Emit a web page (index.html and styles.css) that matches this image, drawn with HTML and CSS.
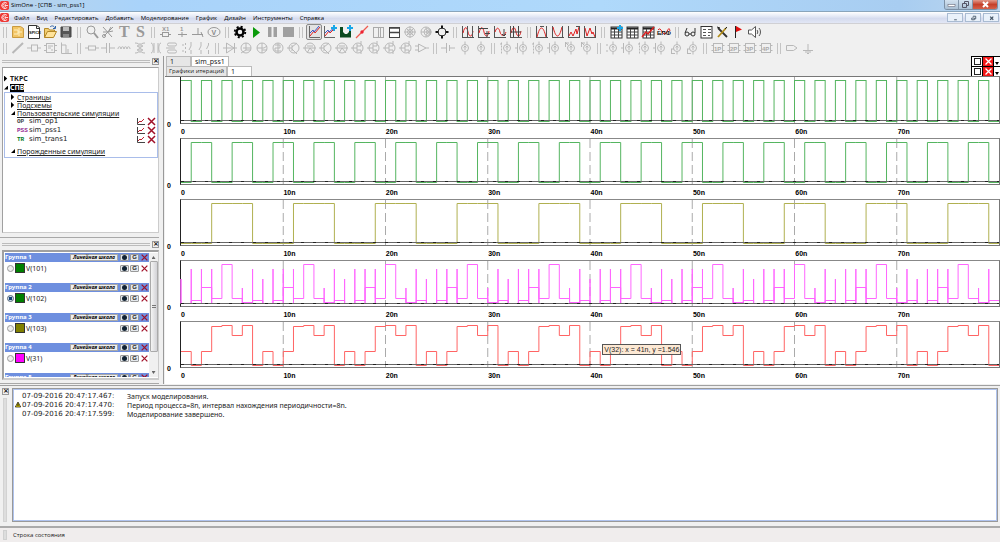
FILE: index.html
```html
<!DOCTYPE html>
<html lang="ru">
<head>
<meta charset="utf-8">
<title>SimOne - [СПВ - sim_pss1]</title>
<link rel="stylesheet" href="styles.css">
</head>
<body>
<div class="app">
  <header class="titlebar">
    <svg class="logo" viewBox="0 0 10 10"><rect width="10" height="10" rx="2" fill="#ee3a35"/><path d="M7.8 2.6A3.4 3.4 0 1 0 8 7.2M6.4 3.9A1.8 1.8 0 1 0 6.5 6M5 5h4" fill="none" stroke="#fff" stroke-width=".9"/></svg>
    <span class="title">SimOne - [СПВ - sim_pss1]</span>
    <div class="winbtns">
      <button class="win" aria-label="Свернуть"><svg viewBox="0 0 9 9"><rect x="1" y="4.500" width="7" height="2" fill="#fff" stroke="#556" stroke-width=".5"/></svg></button>
      <button class="win" aria-label="Развернуть"><svg viewBox="0 0 9 9"><path d="M3.500 3V1.500h4v4H6M1.500 3.500h4v4h-4z" fill="none" stroke="#556"/></svg></button>
      <button class="win win-close" aria-label="Закрыть"><svg viewBox="0 0 9 9"><path d="M2 2l5 5M7 2L2 7" stroke="#fff" stroke-width="2"/></svg></button>
    </div>
  </header>
  <nav class="menubar">
    <svg class="logo" viewBox="0 0 10 10"><rect width="10" height="10" rx="2" fill="#ee3a35"/><path d="M7.8 2.6A3.4 3.4 0 1 0 8 7.2M6.4 3.9A1.8 1.8 0 1 0 6.5 6M5 5h4" fill="none" stroke="#fff" stroke-width=".9"/></svg>
    <div class="menus">
      <button>Файл</button><button>Вид</button><button>Редактировать</button><button>Добавить</button><button>Моделирование</button><button>График</button><button>Дизайн</button><button>Инструменты</button><button>Справка</button>
    </div>
    <div class="mdibtns">
      <button class="mdi" aria-label="Свернуть окно"><svg viewBox="0 0 9 9"><path d="M3 6.500h3" stroke="#456"/></svg></button>
      <button class="mdi" aria-label="Восстановить окно"><svg viewBox="0 0 9 9"><path d="M4 3V2.500h3v3H6M2.500 4.500h3v2h-3z" fill="none" stroke="#456"/></svg></button>
      <button class="mdi" aria-label="Закрыть окно"><svg viewBox="0 0 9 9"><path d="M3 3l3.500 3.500M6.500 3L3 6.500" stroke="#456" stroke-width="1.300"/></svg></button>
    </div>
  </nav>
  <div class="toolbar" id="bar-main"></div>
  <div class="toolbar" id="bar-parts"></div>

  <main class="work">
    <aside class="side">
      <section class="dock">
        <div class="dockbar"><i></i><button class="x" aria-label="Закрыть панель">×</button></div>
        <div class="box tree">
          <div class="node root"><b class="tri"></b><span>ТКРС</span></div>
          <div class="node root"><b class="tri open"></b><span class="sel">СПВ</span></div>
          <div class="branch">
            <div class="node"><b class="tri"></b><a href="#">Страницы</a></div>
            <div class="node"><b class="tri"></b><a href="#">Подсхемы</a></div>
            <div class="node"><b class="tri open"></b><a href="#">Пользовательские симуляции</a></div>
            <div class="sim"><em class="op">OP</em><span>sim_op1</span><button class="plot" aria-label="График"></button><button class="del" aria-label="Удалить"></button></div>
            <div class="sim"><em class="pss">PSS</em><span>sim_pss1</span><button class="plot" aria-label="График"></button><button class="del" aria-label="Удалить"></button></div>
            <div class="sim"><em class="tr">TR</em><span>sim_trans1</span><button class="plot" aria-label="График"></button><button class="del" aria-label="Удалить"></button></div>
            <div class="node last"><b class="tri open"></b><a href="#">Порожденные симуляции</a></div>
          </div>
        </div>
      </section>
      <section class="dock dock-groups">
        <div class="dockbar"><i></i><button class="x" aria-label="Закрыть панель">×</button></div>
        <div class="box groups">
          <div class="grouplist" id="groups"></div>
          <div class="scroll"><b class="up"></b><div class="thumb"></div><b class="down"></b></div>
        </div>
      </section>
    </aside>

    <section class="view">
      <div class="tabs">
        <div class="tabrow"><button class="tab">1</button><button class="tab on">sim_pss1</button>
          <div class="ctl"><button class="sq" aria-label="Развернуть"><i></i></button><button class="sq red" aria-label="Закрыть"></button><button class="sq drop" aria-label="Список"></button></div></div>
        <div class="tabrow"><button class="tab wide">Графики итераций</button><button class="tab on">1</button>
          <div class="ctl"><button class="sq" aria-label="Развернуть"><i></i></button><button class="sq red" aria-label="Закрыть"></button><button class="sq drop" aria-label="Список"></button></div></div>
      </div>
      <div class="charts" id="charts"></div>
    </section>
  </main>

  <section class="log">
    <div class="logside"><button class="x" aria-label="Закрыть журнал">×</button><i></i></div>
    <div class="logbox">
      <div class="msg"><span></span><time>07-09-2016 20:47:17.467:</time><p>Запуск моделирования.</p></div>
      <div class="msg"><span><svg viewBox="0 0 6 6"><path d="M3 .5L5.700 5.500H.3z" fill="#ffe800" stroke="#222" stroke-width=".8"/><path d="M3 2v2.500" stroke="#000"/></svg></span><time>07-09-2016 20:47:17.470:</time><p>Период процесса=8n, интервал нахождения периодичности=8n.</p></div>
      <div class="msg"><span></span><time>07-09-2016 20:47:17.599:</time><p>Моделирование завершено.</p></div>
    </div>
  </section>
  <footer class="status"><i></i><span>Строка состояния</span></footer>
</div>
<script src="app.js"></script>
</body>
</html>
```
FILE: styles.css
```css
* { box-sizing: border-box; }
body {
  margin: 0;
  background: #f0f0f0;
  color: #222;
  font: 7px/9px "DejaVu Sans", sans-serif;
}
button {
  margin: 0;
  padding: 0;
  border: 0;
  background: none;
  color: inherit;
  font: inherit;
}
svg { display: block; }
a { color: inherit; text-decoration: underline; }
.app { display: flex; flex-direction: column; min-height: 100vh; }

/* Window frame */
.titlebar {
  display: flex;
  height: 12px;
  padding: 0 2px 0 0;
  background: linear-gradient(90deg, #b9d3ea, #a9d3fa 14%, #afd9fb 60%, #a8cdf1 90%, #bcd6ee);
  border-bottom: 1px solid #8aa5bb;
}
.logo { width: 9px; height: 9px; margin-top: 1px; }
.title { flex: 1; padding-left: 2px; font: 6px/11px "Open Sans", sans-serif; color: #000; }
.winbtns { display: flex; height: 10px; border: 1px solid #7c90a5; border-top: 0; border-radius: 0 0 3px 3px; overflow: hidden; }
.win { width: 14px; display: grid; place-items: center; background: linear-gradient(#d3e2f0, #a9bfd3); border-right: 1px solid #8296aa; }
.win svg { width: 9px; height: 9px; }
.win-close { width: 24px; border: 0; background: linear-gradient(#e29a8b, #c5402a 50%, #d4614a); }
.menubar {
  display: flex;
  height: 12px;
  background: linear-gradient(#fff, #e3e8f5 40%, #d5dbee 60%, #e2e7f5);
  border-bottom: 1px solid #d0d0d4;
}
.menus { flex: 1; display: flex; gap: 7px; padding-left: 5px; font: 6px/12px "Open Sans", sans-serif; color: #000; }
.mdibtns { display: flex; gap: 2px; padding: 1px 1px 1px 0; }
.mdi { width: 16px; border: 1px solid #a9bbd2; background: #e9f1fa; display: grid; place-items: center; }
.mdi svg { width: 9px; height: 8px; }

/* Toolbars */
.toolbar { display: flex; height: 16px; }
.grip { width: 10px; padding: 3px 3px; }
.grip::before { content: ""; display: block; height: 11px; border: solid #c4c4c4; border-width: 0 1px; }
.tool { width: 16px; height: 16px; }
.tool svg { width: 16px; height: 16px; fill: none; stroke: #b8b8b8; }
.tool text { stroke: none; font-family: "Liberation Sans", sans-serif; font-weight: bold; }
.tool .serif { font-family: "Liberation Serif", serif; }
.tool.on { border: 1px solid #8a8a8a; border-radius: 2px; background: #e2e2e2; }
.tool.on svg { margin: -1px; }

/* Work area */
.work { display: grid; grid-template-columns: 164px 1fr; }
.side { border-right: 1px solid #999; padding-right: 4px; }
.dock { padding: 0 0 4px 2px; border-bottom: 1px solid #a8a8a8; }
.dock-groups { padding-top: 1px; padding-bottom: 3px; }
.dockbar { display: flex; align-items: center; height: 11px; gap: 2px; }
.dockbar i { flex: 1; height: 3px; border: solid #bcbcbc; border-width: 1px 0; }
.x { width: 7px; height: 7px; border: 1px solid #999; font: bold 7px/5px "DejaVu Sans", sans-serif; color: #111; }
.box { background: #fff; border: 1px solid #a0a0a0; border-right-color: #ccc; border-bottom-color: #ccc; }
.tree { height: 166px; padding: 6px 0 0 1px; }
.node { display: flex; align-items: center; gap: 2px; height: 8px; white-space: nowrap; font-family: "Noto Sans", sans-serif; }
.root { height: 9px; font-weight: bold; }
.root .sel { background: #000; color: #fff; line-height: 8px; }
.branch { border: 1px solid #a9bdea; padding: 0 0 2px 6px; }
.tri { width: 4px; height: 6px; background: #000; clip-path: polygon(0 0, 80% 50%, 0 100%); }
.tri.open { height: 4px; clip-path: polygon(100% 0, 100% 100%, 0 100%); }
.sim { display: flex; align-items: center; height: 9px; padding-left: 6px; }
.sim span { flex: 1; }
.sim em { width: 12px; font: bold 6px/9px "Liberation Mono", monospace; }
.op { color: #444; }
.pss { color: #92278f; }
.tr { color: #007a1c; }
.plot, .del { width: 11px; height: 9px; }
.plot svg, .del svg { width: 11px; height: 9px; }
.last { margin-top: 3px; }

.groups { display: flex; height: 130px; padding: 1px 0 1px 1px; overflow: hidden; border-width: 2px; border-right-width: 1px; }
.grouplist { flex: 1; overflow: hidden; }
.group { height: 30px; }
.ghead, .signal { display: grid; grid-template-columns: 1fr auto 9px 9px 9px; align-items: center; column-gap: 1px; font-family: "Noto Sans", sans-serif; }
.ghead { height: 9px; background: #6e8fdf; color: #fff; font-weight: bold; font-size: 6px; }
.scale { height: 7px; padding: 0 2px; margin-right: 1px; background: #eee; border: 1px solid #aaa; color: #000; font: italic bold 5px/5px "Open Sans", sans-serif; }
.signal { height: 12px; }
.signal label { display: flex; align-items: center; gap: 1px; padding-left: 2px; }
.signal input { appearance: none; width: 7px; height: 7px; margin: 0; border: 1px solid #999; border-radius: 50%; background: #eee; }
.signal input:checked { border-color: #567; background: radial-gradient(circle, #123f7a 40%, #cde 50%); }
.swatch { width: 10px; height: 10px; border: 1px solid #333; }
.eye, .gbtn { width: 9px; height: 7px; background: #e4e8ec; border: 1px solid #999; border-radius: 1px; }
.gbtn { color: #222; font: bold 6px/5px "Liberation Sans", sans-serif; }
.eye::before { content: ""; display: block; width: 5px; height: 5px; margin: 0 auto; border-radius: 50%; background: #123; }
.groups .del { width: 9px; }
.groups .del svg { width: 9px; }
.scroll { width: 9px; display: flex; flex-direction: column; align-items: center; padding: 3px 0; background: #f0f0f0; }
.up, .down { width: 4px; height: 3px; background: #666; clip-path: polygon(50% 0, 100% 100%, 0 100%); }
.down { clip-path: polygon(0 0, 100% 0, 50% 100%); margin-top: auto; }
.thumb { width: 8px; height: 91px; margin-top: 2px; border: 1px solid #aaa; border-radius: 1px; background: linear-gradient(90deg, #f4f4f4, #d2d2d6); display: grid; place-items: center; }
.thumb::before { content: ""; width: 4px; height: 4px; background: repeating-linear-gradient(#777 0 1px, transparent 1px 2px); }

/* Tabs */
.view { min-width: 0; background: #fff; margin-left: 1px; }
.tabs { background: #f0f0f0; border-bottom: 1px solid #777; }
.tabrow { display: flex; align-items: stretch; height: 10px; padding-left: 1px; }
.tab { min-width: 25px; padding: 0 3px; border: 1px solid #bbb; border-bottom: 0; background: #e6e6e6; text-align: left; font-family: "Noto Sans", sans-serif; line-height: 9px; }
.tab.on { background: #fff; }
.tab.wide { padding: 0 2px; font-family: "Open Sans", sans-serif; font-size: 6px; }
.ctl { margin-left: auto; display: flex; border: 1px solid #000; border-width: 1px 0 0 1px; }
.sq { width: 11px; background: #fff; border-right: 1px solid #000; display: grid; place-items: center; }
.sq i { width: 7px; height: 7px; border: 1px solid #222; }
.red { background: #f21818; }
.red svg { width: 9px; height: 9px; }
.drop { width: 6px; border-right: 0; }
.drop::before { content: ""; width: 4px; height: 3px; margin-top: 4px; background: #000; clip-path: polygon(0 0, 100% 0, 50% 100%); }

/* Charts */
.charts { padding-bottom: 1px; }
.chart { display: grid; grid-template-columns: 15px 1fr; grid-template-rows: 47px 14px; font: bold 7px/9px "Liberation Sans", sans-serif; color: #000; }
.zero { align-self: end; padding-left: 2px; margin-bottom: -5px; }
.plotarea { position: relative; border: 1px solid #777; border-top-color: #888; border-left-color: #222; }
.chart:first-child .plotarea { border-top: 0; }
.plotarea > svg { width: 100%; height: 100%; overflow: visible; }
.plotarea path { fill: none; vector-effect: non-scaling-stroke; }
.grid { stroke: #aaa; stroke-dasharray: 9 4; }
.grid.solid { stroke-dasharray: none; }
.plotarea .axis { stroke: #666; }
.plotarea .ticks { stroke: #222; stroke-dasharray: 3 9; }
.xlabels { grid-column: 2; display: grid; grid-template-columns: repeat(8, 1fr); padding: 3px 0 0 1px; }
.tip { position: absolute; left: 51.5%; top: 22px; padding: 0 1px; border: 1px solid #555; background: #fde9d4; color: #222; font: 7px/9px "Liberation Sans", sans-serif; white-space: nowrap; }

/* Log and status */
.log { flex: 1; display: grid; grid-template-columns: 12px 1fr; padding: 2px 2px 4px 0; border-top: 1px solid #a0a0a0; margin-top: 1px; }
.logside { display: flex; flex-direction: column; gap: 3px; padding-left: 2px; }
.logside i { flex: 1; width: 4px; margin-left: 1px; background: #ddd; border: 1px solid #d2d2d2; }
.logbox { background: #fff; border: 1px solid #999; outline: 1px solid #afc3ee; outline-offset: -2px; padding: 3px 2px; }
.msg { display: grid; grid-template-columns: 7px 105px 1fr; height: 9px; }
.msg svg { width: 6px; height: 7px; }
.msg p { margin: 0; font-family: "Noto Sans", sans-serif; }
.status { display: flex; height: 16px; padding: 2px 3px; gap: 6px; border-top: 2px solid #aaa; background: #f0eded; font: 6px/10px "Open Sans", sans-serif; }
.status i { width: 4px; background: #ddd; border: 1px solid #d0d0d0; }
```
FILE: app.js
```js
const src = (extra) => `<circle cx="9" cy="8" r="3.500"/><path d="M9 1.500v3M9 11.500v3"/><path d="M9 6v4M7.700 7.500L9 6l1.300 1.500"/>${extra}`;
const bjt = (extra) => `<circle cx="8" cy="8" r="5"/>${extra}`;
const port = (n) => `<rect x="3.500" y="3.500" width="9" height="9"/><path d="M1.500 5.500h2M1.500 10.500h2M12.500 5.500h2M12.500 10.500h2"/><text x="4" y="10.500" font-size="6" fill="#aaa">${n}</text>`;
const wave = (d, extra) => `<path d="M2.500 2v12M2 13.500h12" stroke="#555"/><path d="${d}" stroke="#e02020"/>${extra || ''}`;
const table = '<rect x="3" y="3" width="11" height="11" fill="#fff" stroke="#333"/><path d="M3 4.500h11" stroke="#222" stroke-width="2"/><path d="M3 8h11M3 11h11M6.500 5v9M10.500 5v9" stroke="#444"/>';
const spark = '<path d="M12 1v6M9 4h6" stroke="#18a7e8" stroke-width="2"/>';

const icons = {
  new: '<path d="M2.500 2.500h8l3 2v9h-11z" fill="#f2c566" stroke="#c99a40"/><path d="M4 6h4v4H4M8 8h4M9 4v8" stroke="#fff0c0"/>',
  spice: '<path d="M2.500 1.500h8l3 2v11h-11z" fill="#fff" stroke="#333"/><path d="M10.500 1.500v3h3" stroke="#333"/><text x="3" y="10" font-size="4" fill="#111">SPICE</text>',
  open: '<path d="M2.500 13.500v-9h4l1 1.500h5v2" fill="#f3cf72" stroke="#b48828"/><path d="M2.500 13.500l3-6h9l-3 6z" fill="#ffe39a" stroke="#b48828"/><path d="M8 3c2-2 4-1 5 1M13.500 2v2.500H11" stroke="#2f62a8"/>',
  save: '<path d="M3 3h10v10H3z" fill="#555" stroke="#444"/><path d="M5 3h6v4H5z" fill="#bbb" stroke="none"/><path d="M5 10h6v3H5z" fill="#888" stroke="none"/>',
  find: '<circle cx="7" cy="6" r="4" stroke="#999"/><path d="M10 9l4 5" stroke="#999" stroke-width="2"/>',
  cut: '<path d="M3 3l9 10M13 3L4 12M3 8h5l3-5M8 8l5-1" stroke="#999"/><circle cx="4" cy="12" r="1.500" stroke="#999"/>',
  T: '<text class="serif" x="3" y="13" font-size="16" fill="#999">T</text>',
  S: '<text class="serif" x="4" y="13" font-size="16" fill="#999">S</text>',
  x1: '<text x="4" y="7" font-size="6" fill="#999">X1</text><rect x="4.500" y="8.500" width="6" height="4" stroke="#999"/><path d="M2 10.500h2M11 10.500h2" stroke="#999"/>',
  node: '<text x="6" y="7" font-size="6" fill="#999">1</text><path d="M4 10.500h9M8 8v5" stroke="#999"/>',
  lead: '<path d="M2 10.500h11M8 4v6M11 8l2 5" stroke="#999"/>',
  probe: '<ellipse cx="8" cy="8" rx="6" ry="4.500" stroke="#999"/><text x="5.500" y="11" font-size="7" fill="#888">V</text>',
  gear: '<circle cx="8" cy="8" r="3.500" stroke="#000" stroke-width="2.500"/><circle cx="8" cy="8" r="5.300" stroke="#000" stroke-width="1.800" stroke-dasharray="2.080 2.080"/>',
  play: '<path d="M5 3l7 5.500L5 14z" fill="#0a9a0a" stroke="none"/>',
  pause: '<path d="M4 3h3.500v10H4zM9.500 3H13v10H9.500z" fill="#a0a0a0" stroke="none"/>',
  stop: '<path d="M3 3h11v10H3z" fill="#a0a0a0" stroke="none"/>',
  plot: '<path d="M3.500 2v11.500H14" stroke="#666"/><path d="M4 12l4-5 1 2 5-6" stroke="#e02020"/><path d="M4 9l3-3 1 2 5-6" stroke="#3657c8"/>',
  plotadd: '<path d="M2.500 2v11.500H13" stroke="#666"/><path d="M3 12l4-5 1 2 4-4" stroke="#e02020"/><path d="M3 9l3-3 1 2 5-4" stroke="#3657c8"/>' + spark,
  eyeadd: '<path d="M2 3h3v5l2 2h2l2-2V7h2v6.500H2z" fill="#0b4a20" stroke="none"/>' + spark,
  marker: '<path d="M2 14L14 2" stroke="#ee5a50" stroke-width="1.200"/><circle cx="8" cy="8" r="1.700" fill="#e23" stroke="none"/>',
  cols: '<rect x="3.500" y="3.500" width="10" height="10" stroke="#aaa"/><path d="M8.500 3v11M10.500 3v11" stroke="#aaa"/>',
  rows: '<rect x="3.500" y="3.500" width="10" height="10" fill="#fff" stroke="#444"/><path d="M3 4h11M3 8.500h11" stroke="#444" stroke-width="1.600"/>',
  polar: '<circle cx="8" cy="8" r="5"/><circle cx="8" cy="8" r="2.500"/><path d="M8 2v12M2 8h12M4 4l8 8M12 4l-8 8"/>',
  smith: '<circle cx="8" cy="8" r="5"/><circle cx="9.500" cy="8" r="3.500"/><circle cx="10.500" cy="8" r="2"/><path d="M3 8h10M8 3c0 4 2 5 5 5M8 13c0-4 2-5 5-5"/>',
  fit: '<circle cx="8" cy="8" r="4" stroke="#333"/><path d="M8 1.500v3M8 11.500v3M1.500 8h3M11.500 8h3" stroke="#111" stroke-width="2"/>',
  c1: wave('M3 9c2-8 4-6 5-1s4 6 5-1', '<path d="M7.500 2v12M12.500 2v12" stroke="#555"/>'),
  c2: wave('M3 9c2-8 4-6 5-1s4 6 5-1', '<path d="M3 4.500h9M9 9.500h5M11 7v6" stroke="#444"/>'),
  c3: wave('M3 8c2-6 4-4 5 0s4 5 6 0', '<path d="M12 5v7M10 10l2 2 2-2" stroke="#444"/>'),
  c4: wave('M3 9c2-8 4-6 5-1s4 6 5-1', '<path d="M5.500 2v11M10.500 2v11M3 8h10" stroke="#444"/>'),
  m1: wave('M3 13c3-12 6-12 9 0', '<path d="M12.500 2v12M6 2.500h4" stroke="#555"/>'),
  m2: wave('M3 3c3 12 6 12 9 0', '<path d="M12.500 2v12" stroke="#555"/>'),
  m3: wave('M3 12l2-4 2 4 3-7 1 5 2-7', '<path d="M13.500 2v12M10 2.500h4" stroke="#555"/>'),
  m4: wave('M3 4l2 8 3-8 2 6 1-2 2 5', '<path d="M13.500 2v12" stroke="#555"/>'),
  tabadd: table + spark,
  tab: table,
  tabplot: table + '<path d="M2 13l4-5 2 2 6-7" stroke="#e02020" stroke-width="1.500"/>',
  fft: '<path d="M2 6c3-5 5 8 8 3s3-6 4-2" stroke="#e02020"/><text x="1" y="11" font-size="6" fill="#111">БПФ</text>',
  glasses: '<circle cx="5" cy="10" r="2" stroke="#333"/><circle cx="11" cy="10" r="2" stroke="#333"/><path d="M7 10h2M3 9l2-5M13 9V4" stroke="#333"/>',
  list: '<rect x="3" y="2.500" width="11" height="11.500" fill="#fff" stroke="#333"/><path d="M5 5.500h3M10 5.500h3M5 8.500h3M10 8.500h3M5 11.500h3M10 11.500h2" stroke="#555"/>',
  tools: '<path d="M4 4l9 9" stroke="#333" stroke-width="1.800"/><path d="M12 4l-8 9" stroke="#b28c18" stroke-width="1.800"/><path d="M3 3l3 1M13 3l-2 2" stroke="#222"/>',
  flag: '<path d="M5.500 2v12" stroke="#222"/><path d="M6 2l6 3.500L6 8z" fill="#e01010" stroke="none"/>',
  sound: '<path d="M2.500 6h3l4-3.500v11L5.500 10h-3z" fill="#fff" stroke="#555"/><path d="M11 6c1 1 1 3 0 4M13 4c2 2 2 6 0 8" stroke="#555"/>',
  wire: '<path d="M2.500 13L13 3" stroke-width="2"/>',
  block: '<rect x="5.500" y="5" width="6" height="6"/><path d="M1 8h4M12 8h3"/>',
  chip: '<rect x="4.500" y="3.500" width="8" height="9"/><path d="M2 5.500h2M2 10.500h2M13 5.500h2M13 10.500h2"/><path d="M6 6h5M6 8h3M9 10h2"/>',
  step: '<path d="M3.500 2.500v11H14M3 5h5v8M10 9v4"/>',
  res: '<rect x="4.500" y="6" width="7" height="4"/><path d="M1 8h3M12 8h3"/>',
  cap: '<path d="M1 8h5.500M9.500 8H15M6.500 3v10M9.500 3v10"/>',
  ind: '<path d="M2 9c0-3 3-3 3 0 0-3 3-3 3 0 0-3 3-3 3 0 0-3 3-3 3 0"/>',
  trf: '<path d="M3 3c5 0 5 3 2 3 3 0 3 4 0 4 3 0 3 3-2 3M13 3c-5 0-5 3-2 3-3 0-3 4 0 4-3 0-3 3 2 3M8 3v10"/>',
  trf2: '<path d="M3 3c3 0 3 10 0 10M13 3c-3 0-3 10 0 10M6 3v10M10 3v10"/>',
  line: '<rect x="3.500" y="3" width="9" height="3" rx="1.500"/><rect x="3.500" y="10" width="9" height="3" rx="1.500"/><path d="M2 8h9"/>',
  sw: '<path d="M5.500 3v10" stroke-dasharray="2 2"/><path d="M11 2v4l-2 4M11 10v4M2 5h2M2 11h2"/>',
  sw2: '<path d="M5 2v4l-2 4M5 10v4M12.500 3v2l-2 4M12.500 10v4"/>',
  diode: '<path d="M4.500 3v10L12 8zM12.500 3v10M1 8h14"/>',
  v1: bjt('<path d="M8 3v7h5M5 8h8M3 13l5-3"/>'),
  v2: bjt('<path d="M8 3v10M3 8h7l3-2M8 10h5"/>'),
  v3: bjt('<path d="M5 5h5v3H5v3h6M8 3v10"/>'),
  q1: bjt('<path d="M6 5v6M1 8h5M6 7l5-4M6 9l5 5"/>'),
  q2: bjt('<path d="M1 8h13M5 6h6M8 8l4 5M8 8L5 13"/>'),
  j1: bjt('<path d="M7 4v8M1 8h6M7 6h4V1M7 10h4v4"/>'),
  op: '<path d="M4.500 4v8L12 8zM1 6h3M1 10h3M12 8h3"/>',
  bat: '<path d="M1 8h5.500M9.500 8H15M6.500 3v10M9.500 5v6"/>',
  s1: src(''),
  s2: src('<path d="M2 5h2M2 11h2"/>'),
  s3: src('<path d="M2 4h3M3.500 2.500v11" stroke-dasharray="2 1"/>'),
  s4: src('<path d="M3.500 3v10M1 8h2"/>'),
  s5: src('<path d="M3 3h4M3.500 3v4M3 2l3 3"/>'),
  s6: src('<path d="M3 13.500h4M3.500 9v4M3 9h3"/>'),
  p1: port('1P'), p2: port('2P'), p3: port('3P'), p4: port('4P'),
  tag: '<path d="M2.500 5.500h7L13 8l-3.500 2.500h-7z"/>',
  gnd: '<path d="M8 4v6M3 10.500h10M5 12h6M7 13.500h2"/>'
};

const bars = {
  'bar-main': '| new spice open save | find cut T S | x1 node lead probe | gear play pause stop | plot! plotadd eyeadd marker cols rows polar smith fit | c1 c2 c3 c4 | m1 m2 m3 m4 | tabadd tab tabplot fft | glasses list tools flag sound',
  'bar-parts': '| wire block chip step | res cap ind trf trf2 line sw sw2 | diode v1 v2 v3 q1 q2 q1 q2 j1 j1 j1 j1 op | bat s1 s1 | s3 s4 s3 s4 s5 s5 | s2 s4 s3 s4 s6 s6 | p1 p2 p3 p4 | tag gnd'
};
for (const [id, spec] of Object.entries(bars)) {
  document.getElementById(id).innerHTML = spec.split(' ').map((name) => {
    if (name === '|') return '<span class="grip"></span>';
    const on = name.endsWith('!');
    const key = name.replace('!', '');
    return `<button class="tool${on ? ' on' : ''}" aria-label="${key}"><svg viewBox="0 0 16 16">${icons[key]}</svg></button>`;
  }).join('');
}

// Small glyphs shared by the panels
const cross = '<svg viewBox="0 0 11 9"><path d="M2 1l7 7M9 1L2 8" stroke="#a01028" stroke-width="1.500"/></svg>';
const mini = '<svg viewBox="0 0 11 9"><path d="M2.500 1v6.500H10" fill="none" stroke="#444"/><path d="M3 6l2-2 1 1 3-3" fill="none" stroke="#c02030"/></svg>';
document.querySelectorAll('.del').forEach((e) => { e.innerHTML = cross; });
document.querySelectorAll('.plot').forEach((e) => { e.innerHTML = mini; });
document.querySelectorAll('.red').forEach((e) => {
  e.innerHTML = '<svg viewBox="0 0 9 9"><path d="M1.500 1.500l6 6M7.500 1.500l-6 6" stroke="#fff" stroke-width="1.300"/></svg>';
});

const signals = [['V(101)', '#008000'], ['V(102)', '#008000'], ['V(103)', '#808000'], ['V(31)', '#ff00ff'], ['V(32)', '#ff0000']];
const buttons = `<button class="eye" aria-label="Показать"></button><button class="gbtn">G</button><button class="del" aria-label="Удалить">${cross}</button>`;
document.getElementById('groups').innerHTML = signals.map(([name, color], i) => `
  <div class="group">
    <div class="ghead"><span>Группа ${i + 1}</span><button class="scale">Линейная шкала</button>${buttons}</div>
    <div class="signal"><label><input type="radio" name="signal"${i === 1 ? ' checked' : ''}><span class="swatch" style="background:${color}"></span>${name}</label><span></span>${buttons}</div>
  </div>`).join('');

// Waveforms: one level per nanosecond, repeated over 80 ns.
// Spikes are peaks drawn at the start of the matching nanosecond.
const charts = [
  { color: '#55b560', levels: [3, 43] },
  { color: '#55b560', levels: [43, 3, 3, 43] },
  { color: '#b0b050', levels: [43, 43, 43, 3, 3, 3, 3, 43] },
  { color: '#ff66ff', levels: [42, 39, 26, 37, 3, 37, 41, 39], spikes: [18, 8, 8, 8, 0, 0, 27, 8] },
  { color: '#ff6464', levels: [29, 43, 29, 4, 3, 13, 3, 43] }
];
const trace = ({ levels, spikes }) => {
  let d = '';
  for (let t = 0; t < 80; t++) {
    const k = t % levels.length;
    const y = levels[k] + 0.5;
    d += t ? `V${y}` : `M0 ${y}`;
    if (spikes && spikes[k]) d += `V${spikes[k]}V42V${y}`;
    d += `H${t + 1}`;
  }
  return d;
};
let gridPath = '';
for (let x = 10; x < 80; x += 10) gridPath += `M${x} 0V45`;
document.getElementById('charts').innerHTML = charts.map((c, i) => `
  <div class="chart">
    <span class="zero">0</span>
    <div class="plotarea">
      <svg viewBox="0 0 80 45" preserveAspectRatio="none">
        <path class="grid${i ? '' : ' solid'}" d="${gridPath}"/>
        <path d="${trace(c)}" stroke="${c.color}"/>
        <path class="axis" d="M0 42.500H80"/><path class="ticks" d="M0 42.500H80"/>
      </svg>
      ${i === 4 ? '<span class="tip">V(32): x = 41n, y =1.546</span>' : ''}
    </div>
    <div class="xlabels">${[0, 1, 2, 3, 4, 5, 6, 7].map((n) => `<span>${n ? n + '0n' : '0'}</span>`).join('')}</div>
  </div>`).join('');
```
